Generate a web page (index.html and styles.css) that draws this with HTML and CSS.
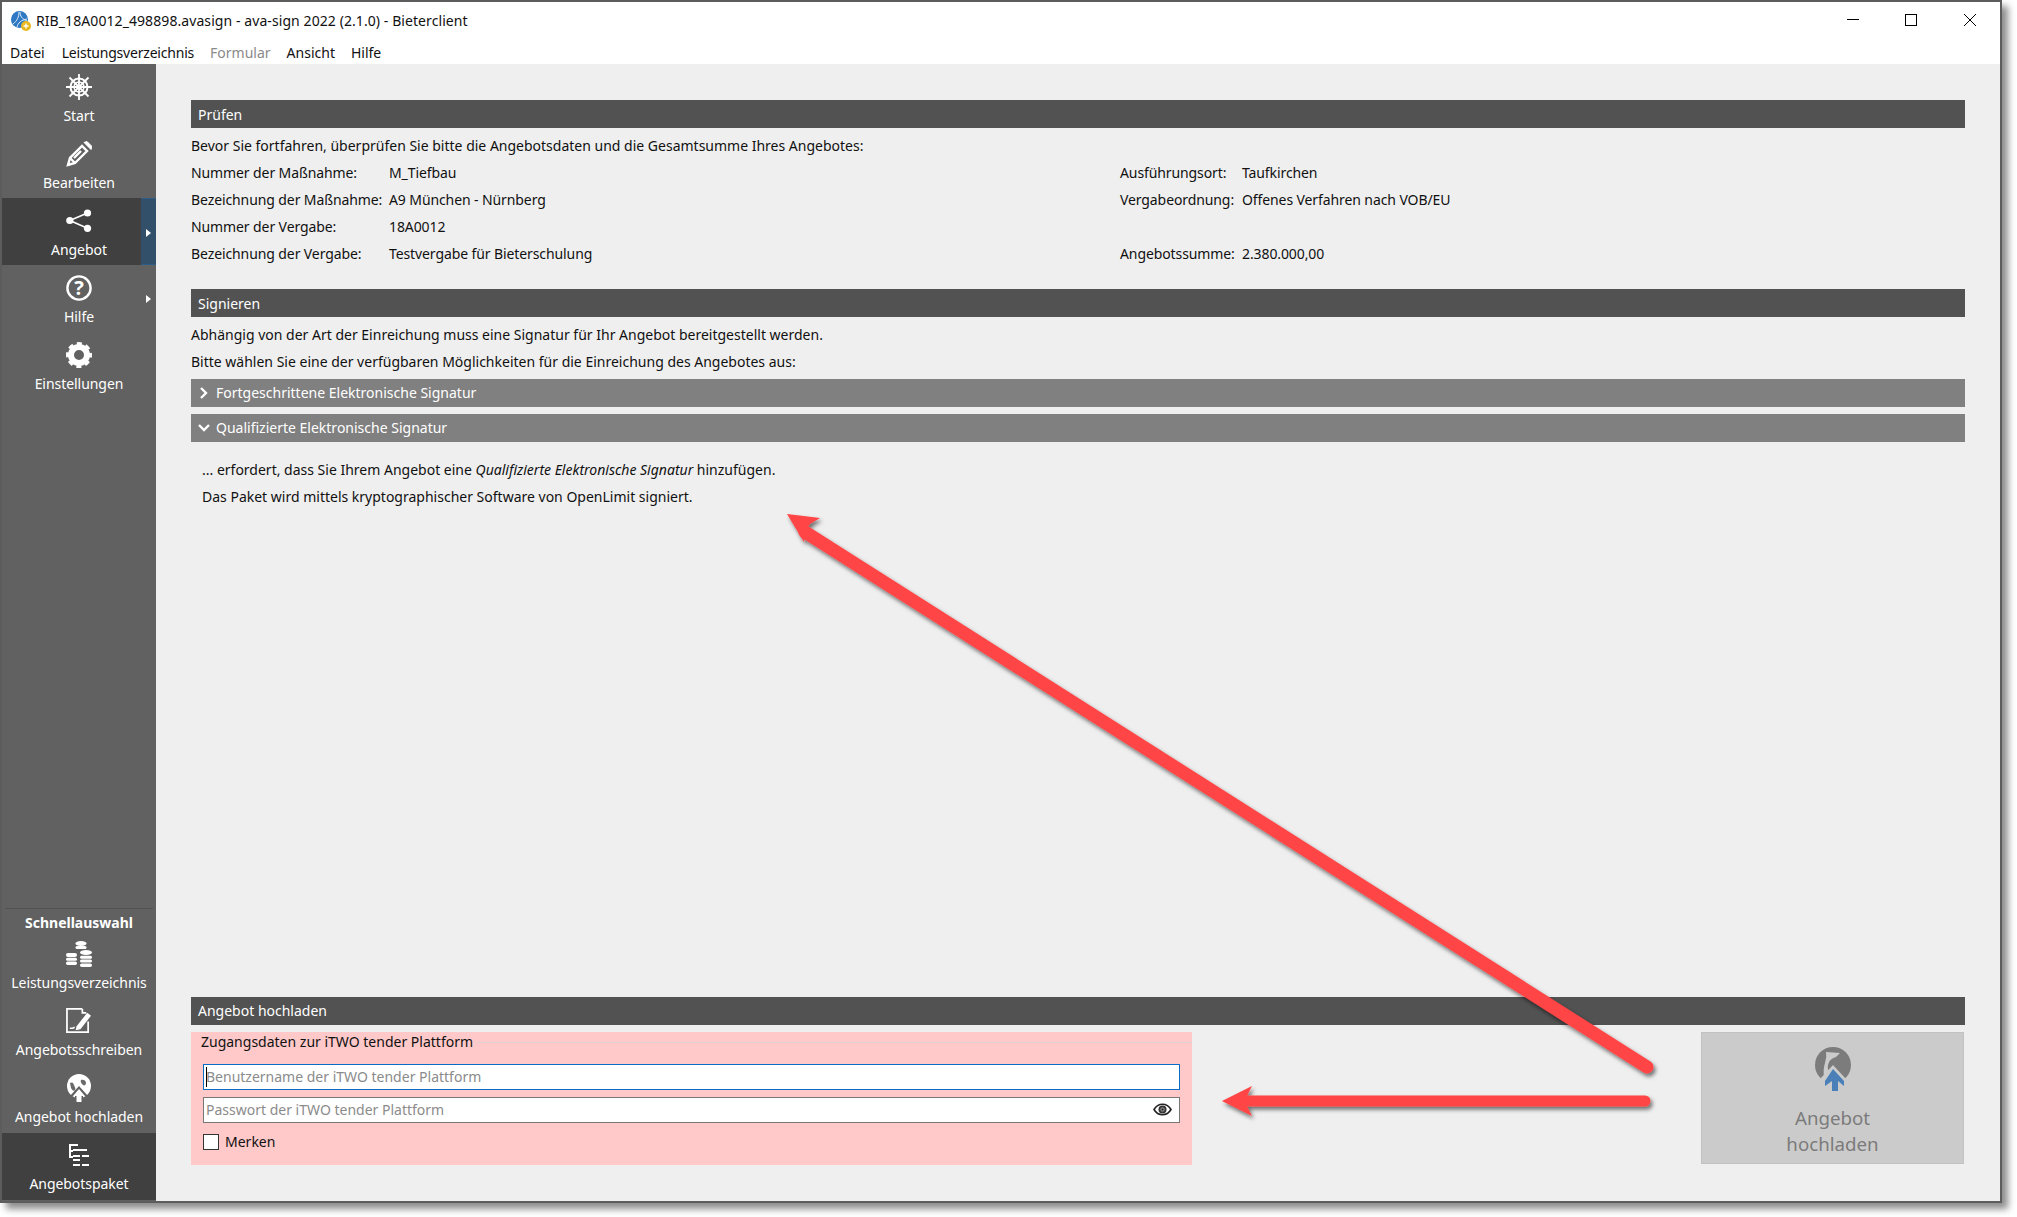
FILE: index.html
```html
<!DOCTYPE html>
<html lang="de">
<head>
	<meta charset="UTF-8" />
	<title>RIB_18A0012_498898.avasign - ava-sign 2022 (2.1.0) - Bieterclient</title>
	<link rel="stylesheet" href="styles.css">
</head>
<body>
<div class="window">
	<div class="titlebar">
		<svg class="appicon" viewBox="0 0 20 20">
			<circle cx="8.500" cy="8.500" r="8.500" fill="#2f79c4"/>
			<path d="M2 13C6 10 8 6 8 1M6 16c1-4 4-7 10-8M9 1c0 4 2 7 7 9" stroke="#dcebf8" stroke-width="1" fill="none"/>
			<circle cx="15" cy="15" r="5" fill="#e8b820"/>
			<path d="M15 12.500v5M12.500 15h5" stroke="#fff" stroke-width="1.400"/>
		</svg>
		<span class="title">RIB_18A0012_498898.avasign - ava-sign 2022 (2.1.0) - Bieterclient</span>
		<div class="winbtns">
			<svg width="12" height="12" viewBox="0 0 12 12"><path d="M0 5.500h12" stroke="#000"/></svg>
			<svg width="12" height="12" viewBox="0 0 12 12"><rect x=".5" y=".5" width="11" height="11" fill="none" stroke="#000"/></svg>
			<svg width="12" height="12" viewBox="0 0 12 12"><path d="M0 0l12 12M12 0L0 12" stroke="#000"/></svg>
		</div>
	</div>
	<div class="menubar">
		<span>Datei</span><span class="tight">Leistungsverzeichnis</span><span class="off">Formular</span><span>Ansicht</span><span>Hilfe</span>
	</div>
	<div class="main">
		<div class="sidebar">
			<div class="navitem">
				<svg class="navicon" viewBox="0 0 26 26" fill="none" stroke="#fff">
					<path d="M13 0v26M0 13h26M3.500 3.500l19 19M22.500 3.500l-19 19" stroke-width="1.800"/>
					<circle cx="13" cy="13" r="8.500" stroke-width="2"/>
					<circle cx="13" cy="13" r="5" stroke-width="1.400"/>
					<circle cx="13" cy="13" r="2" fill="#fff" stroke="none"/>
				</svg>
				<span>Start</span>
			</div>
			<div class="navitem">
				<svg class="navicon" viewBox="0 0 26 26" fill="none" stroke="#fff" stroke-width="2.400">
					<path d="M2 24l2-7L16 5l5 5L9 22z"/><path d="M4 17l5 5M8 17l7-7"/>
					<path d="M18 1.500l3-1 5 5-1 3z" fill="#fff" stroke="#fff" stroke-width="1"/>
					<path d="M1 25l1-4 3 3z" fill="#fff" stroke="none"/>
				</svg>
				<span>Bearbeiten</span>
			</div>
			<div class="navitem active">
				<svg class="navicon" viewBox="0 0 26 26" fill="#fff">
					<circle cx="3.800" cy="12.500" r="3.600"/><circle cx="21.500" cy="5" r="3.600"/><circle cx="21.500" cy="20.300" r="3.600"/>
					<path d="M3.800 12.500L21.500 5M3.800 12.500l17.700 7.800" stroke="#fff" stroke-width="1.500"/>
				</svg>
				<span>Angebot</span>
				<div class="flyout sel"></div>
			</div>
			<div class="navitem">
				<svg class="navicon" viewBox="0 0 26 26" fill="none">
					<circle cx="13" cy="13" r="11.600" stroke="#fff" stroke-width="2.400"/>
					<text x="13" y="20" class="qmark">?</text>
				</svg>
				<span>Hilfe</span>
				<div class="flyout"></div>
			</div>
			<div class="navitem">
				<svg class="navicon" viewBox="0 0 26 26" fill="none" stroke="#fff">
					<circle cx="13" cy="13" r="8" stroke-width="6"/>
					<circle cx="13" cy="13" r="11" stroke-width="4" stroke-dasharray="4.800 3.840" stroke-dashoffset="2.400"/>
				</svg>
				<span>Einstellungen</span>
			</div>
			<div class="quick">
				<div class="quicktitle">Schnellauswahl</div>
				<div class="navitem">
					<svg class="navicon coins" viewBox="0 0 26 26" fill="#fff">
						<ellipse cx="15" cy="2.500" rx="5.500" ry="2.500"/><rect x="9.500" y="5" width="11" height="3" rx="1.500"/>
						<rect x="0" y="12" width="11" height="4" rx="2"/><rect x="0" y="16.800" width="11" height="3" rx="1.500"/><rect x="0" y="20.600" width="11" height="3.400" rx="1.700"/>
						<ellipse cx="20" cy="11.500" rx="6" ry="2.500"/><rect x="14" y="14.800" width="12" height="3" rx="1.500"/><rect x="14" y="18.600" width="12" height="3" rx="1.500"/><rect x="14" y="22.400" width="12" height="3.600" rx="1.800"/>
					</svg>
					<span>Leistungsverzeichnis</span>
				</div>
				<div class="navitem">
					<svg class="navicon" viewBox="0 0 27 27" fill="none" stroke="#fff">
						<path d="M17 1H1v24h22V14M17 1v4h4" stroke-width="1.800"/>
						<path d="M11 19L22 5l4 3-11 14-5 1z" fill="#fff" stroke="none"/>
						<path d="M4 21h3l2-1" stroke-width="1.600"/>
					</svg>
					<span>Angebotsschreiben</span>
				</div>
				<div class="navitem">
					<svg class="navicon globe" viewBox="0 0 26 28">
						<circle cx="13" cy="12" r="12" fill="#fff"/>
						<path d="M4 9c2-1 3-1 4 2s2 3 1 5-3 0-4-2zM15 6c3-1 5 1 5 3s-2 3-3 2-3-3-2-5z" fill="#6a6a6a"/>
						<path d="M13 12l9 10h-5v6H9v-6H4z" fill="#616161"/><path d="M13 15l6 7h-3.500v6h-5v-6H7z" fill="#fff"/>
					</svg>
					<span>Angebot hochladen</span>
				</div>
				<div class="navitem active">
					<svg class="navicon" viewBox="0 0 26 26" fill="#fff">
						<path d="M3 2h9v2H5v4h2v2H5v4h2v2H3zM7 7h14v2H7zM7 13h7v2H7zM16 13h7v2h-7zM7 17h7v2H7zM7 22h7v2H7zM16 22h7v2h-7z"/>
					</svg>
					<span>Angebotspaket</span>
				</div>
			</div>
		</div>
		<div class="content">
			<div class="secthead">Prüfen</div>
			<div class="line">Bevor Sie fortfahren, überprüfen Sie bitte die Angebotsdaten und die Gesamtsumme Ihres Angebotes:</div>
			<div class="facts">
				<span>Nummer der Maßnahme:</span><span>M_Tiefbau</span><span>Ausführungsort:</span><span>Taufkirchen</span>
				<span>Bezeichnung der Maßnahme:</span><span>A9 München - Nürnberg</span><span>Vergabeordnung:</span><span>Offenes Verfahren nach VOB/EU</span>
				<span>Nummer der Vergabe:</span><span>18A0012</span><span></span><span></span>
				<span>Bezeichnung der Vergabe:</span><span>Testvergabe für Bieterschulung</span><span>Angebotssumme:</span><span>2.380.000,00</span>
			</div>
			<div class="secthead sign">Signieren</div>
			<div class="line">Abhängig von der Art der Einreichung muss eine Signatur für Ihr Angebot bereitgestellt werden.</div>
			<div class="line">Bitte wählen Sie eine der verfügbaren Möglichkeiten für die Einreichung des Angebotes aus:</div>
			<div class="accordion first">
				<svg width="12" height="12" viewBox="0 0 12 12"><path d="M3 1l5 5-5 5" fill="none" stroke="#fff" stroke-width="2.400"/></svg>
				Fortgeschrittene Elektronische Signatur
			</div>
			<div class="accordion">
				<svg width="12" height="12" viewBox="0 0 12 12"><path d="M1 3l5 5 5-5" fill="none" stroke="#fff" stroke-width="2.400"/></svg>
				Qualifizierte Elektronische Signatur
			</div>
			<div class="accbody">
				<div class="line">... erfordert, dass Sie Ihrem Angebot eine <i>Qualifizierte Elektronische Signatur</i> hinzufügen.</div>
				<div class="line">Das Paket wird mittels kryptographischer Software von OpenLimit signiert.</div>
			</div>
			<div class="upload">
				<div class="secthead">Angebot hochladen</div>
				<div class="uploadrow">
					<div class="login">
						<div class="legend"><span>Zugangsdaten zur iTWO tender Plattform</span></div>
						<div class="field focus"><span class="caret"></span>Benutzername der iTWO tender Plattform</div>
						<div class="field">Passwort der iTWO tender Plattform
							<svg class="eye" width="19" height="13" viewBox="0 0 19 13">
								<path d="M1 6.500c4-7 13-7 17 0-4 7-13 7-17 0z" fill="none" stroke="#222" stroke-width="1.600"/>
								<circle cx="9.500" cy="6.500" r="4" fill="#333"/><circle cx="9.500" cy="6.500" r="2.200" fill="#888"/><circle cx="9.500" cy="6.500" r="1" fill="#222"/>
							</svg>
						</div>
						<label class="remember"><span class="check"></span>Merken</label>
					</div>
					<div class="uploadbtn">
						<svg width="38" height="46" viewBox="0 0 38 46">
							<circle cx="19" cy="18" r="18" fill="#7c7c7c"/>
							<path d="M12 5L26 6 22 10Q15 12 14 18 13 22 16 26L10 30Q9 22 11 16 13 10 12 5z" fill="#cbcbcb"/>
							<path d="M19 18l13 14v4h-6v9H12v-9H6v-4z" fill="#cbcbcb"/>
							<path d="M19 22l11 12v5l-6-5v10h-6V34l-7 5v-5z" fill="#4a7fb8"/>
						</svg>
						<span>Angebot<br>hochladen</span>
					</div>
				</div>
			</div>
		</div>
	</div>
	<svg class="arrows" viewBox="0 0 2017 1217" width="2017" height="1217">
		<defs>
			<filter id="shade" x="-10%" y="-10%" width="120%" height="120%">
				<feDropShadow dx="2" dy="3" stdDeviation="2" flood-color="#000" flood-opacity=".55"/>
			</filter>
		</defs>
		<g filter="url(#shade)" fill="#ff4444" stroke="none">
			<path d="M805 532L1647 1067" stroke="#ff4444" stroke-width="13" stroke-linecap="round"/>
			<path d="M787 514L820 518 810 524 805 532 804 542z"/>
			<path d="M1245 1101H1645" stroke="#ff4444" stroke-width="11" stroke-linecap="round"/>
			<path d="M1222 1101L1252 1086 1247 1096V1106L1252 1116z"/>
		</g>
	</svg>
</div>
</body>
</html>
```
FILE: styles.css
```css
html,body{margin:0;padding:0;background:#fff;}
body{width:2017px;height:1217px;overflow:hidden;font-family:"Noto Sans","Open Sans",sans-serif;font-size:14px;color:#111;}

.window{position:relative;width:1998px;height:1199px;border:2px solid #5c5c5c;display:flex;flex-direction:column;background:#fff;box-shadow:6px 6px 7px rgba(0,0,0,.45);}
.arrows{position:absolute;left:-2px;top:-2px;pointer-events:none;}

.titlebar{height:37px;display:flex;align-items:center;padding-left:9px;}
.appicon{width:20px;height:20px;margin-right:5px;}
.title{flex:1;letter-spacing:.08px;}
.winbtns{display:flex;gap:46px;padding-right:24px;margin-bottom:2px;}
.winbtns svg:last-child{margin-left:1px;}

.menubar{height:25px;display:flex;gap:17px;padding-left:8px;align-items:flex-start;line-height:27px;}
.menubar .off{color:#8a8a8a;}
.menubar .tight{letter-spacing:-.2px;}
.menubar span:nth-child(n+3){margin-left:-1px;}

.main{flex:1;display:flex;min-height:0;}

.sidebar{width:154px;background:#616161;color:#fff;display:flex;flex-direction:column;}
.navitem{position:relative;height:67px;display:flex;flex-direction:column;align-items:center;padding-top:8px;box-sizing:border-box;letter-spacing:-.05px;}
.navitem span{margin-top:auto;margin-bottom:5px;line-height:20px;}
.navitem.active{background:#404040;}
.navicon{width:26px;height:26px;margin-top:2px;}
.navicon.globe{height:28px;margin-top:0;}
.quick .navicon{margin-top:1px;}
.quick .navicon.globe{margin-top:0;}
.qmark{font:bold 20px "Noto Sans",sans-serif;fill:#fff;text-anchor:middle;}
.flyout{position:absolute;right:0;top:0;bottom:0;width:15px;box-sizing:border-box;}
.flyout:after{content:"";position:absolute;left:5px;top:30px;border-left:5px solid #fff;border-top:4px solid transparent;border-bottom:4px solid transparent;}
.flyout.sel{background:#33506a;border-top:1px solid #2c5c88;border-bottom:1px solid #2c5c88;}

.quick{margin-top:auto;padding-bottom:1px;}
.quick .navitem span{margin-bottom:6px;}
.quicktitle{height:24px;box-sizing:border-box;margin:0 3px;border-top:1px solid #525252;line-height:28px;text-align:center;font-weight:bold;}

.content{flex:1;background:#efefef;padding:36px 35px 0 35px;display:flex;flex-direction:column;min-width:0;}
.secthead{height:28px;line-height:29px;background:#525252;color:#fff;padding-left:7px;margin-bottom:4px;}
.secthead.sign{margin-top:22px;}
.upload .secthead{line-height:27px;}
.line{height:27px;line-height:27px;}
.facts{display:grid;grid-template-columns:198px 731px 122px 1fr;grid-auto-rows:27px;line-height:27px;letter-spacing:-.1px;}
.accordion{height:28px;line-height:28px;background:#808080;color:#fff;margin-bottom:7px;display:flex;align-items:center;gap:6px;padding-left:7px;}
.accordion.first{margin-top:4px;}
.accbody{padding:7px 0 0 11px;}

.upload{margin-top:auto;padding-bottom:36px;}
.uploadrow{display:flex;justify-content:space-between;align-items:flex-start;margin-top:7px;}
.login{width:1001px;height:133px;box-sizing:border-box;background:#ffc9c9;padding:0 12px;}
.legend{display:flex;height:20px;line-height:20px;margin:0 -12px 12px;align-items:center;}
.legend span{padding:0 3px 0 10px;}
.legend:after{content:"";flex:1;border-top:1px solid #e0d0d0;}
.field{position:relative;height:26px;box-sizing:border-box;border:1px solid #777;background:#fff;color:#8b8b8b;line-height:24px;padding-left:2px;margin-bottom:7px;}
.field.focus{border-color:#0a6cc4;}
.caret{position:absolute;left:2px;top:2px;height:20px;border-left:1px solid #000;}
.eye{position:absolute;right:7px;top:5px;}
.remember{display:flex;align-items:center;gap:6px;margin-top:9px;}
.check{width:16px;height:16px;box-sizing:border-box;border:1px solid #333;background:#fff;}
.uploadbtn{width:263px;height:132px;margin:0 1px 0 0;box-sizing:border-box;background:#cbcbcb;border:1px solid #c2c2c2;display:flex;flex-direction:column;align-items:center;padding-top:14px;color:#7b7b7b;font-size:18.7px;line-height:26px;text-align:center;}
.uploadbtn span{margin-top:12px;}
```
